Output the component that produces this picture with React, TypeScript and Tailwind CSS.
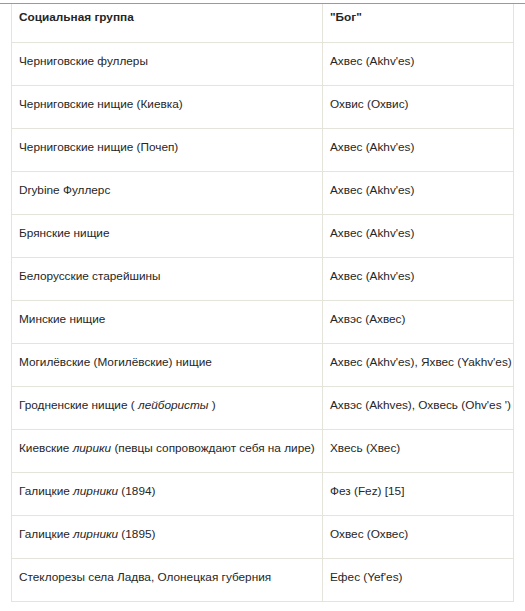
// Таблица «Социальная группа» / «Бог»: простая разметка с рамками.
const ROWS: { group: React.ReactNode; god: string }[] = [
  { group: 'Черниговские фуллеры', god: "Ахвес (Akhv'es)" },
  { group: 'Черниговские нищие (Киевка)', god: 'Охвис (Охвис)' },
  { group: 'Черниговские нищие (Почеп)', god: "Ахвес (Akhv'es)" },
  { group: 'Drybine Фуллерс', god: "Ахвес (Akhv'es)" },
  { group: 'Брянские нищие', god: "Ахвес (Akhv'es)" },
  { group: 'Белорусские старейшины', god: "Ахвес (Akhv'es)" },
  { group: 'Минские нищие', god: 'Ахвэс (Ахвес)' },
  {
    group: 'Могилёвские (Могилёвские) нищие',
    god: "Ахвес (Akhv'es), Яхвес (Yakhv'es)",
  },
  {
    group: (
      <>
        Гродненские нищие ( <i>лейбористы</i> )
      </>
    ),
    god: "Ахвэс (Akhves), Охвесь (Ohv'es ')",
  },
  {
    group: (
      <>
        Киевские <i>лирики</i> (певцы сопровождают себя на лире)
      </>
    ),
    god: 'Хвесь (Хвес)',
  },
  {
    group: (
      <>
        Галицкие <i>лирники</i> (1894)
      </>
    ),
    god: 'Фез (Fez) [15]',
  },
  {
    group: (
      <>
        Галицкие <i>лирники</i> (1895)
      </>
    ),
    god: 'Охвес (Охвес)',
  },
  {
    group: 'Стеклорезы села Ладва, Олонецкая губерния',
    god: "Ефес (Yef'es)",
  },
];

export default function App() {
  return (
    <div
      className="min-h-[611px] w-[525px] bg-white pt-[3px] text-[11.8px] leading-4 text-[#262626]"
      style={{ fontFamily: '"Liberation Sans", Arial, sans-serif' }}
    >
      <div className="h-px w-full bg-[#9a9a9a]" />
      <table className="ml-[11px] w-[502px] table-fixed border-collapse">
        <colgroup>
          <col className="w-[311px]" />
          <col className="w-[191px]" />
        </colgroup>
        <thead>
          <tr className="h-[38px]">
            <th className="border-x border-b border-[#e4e4da] px-[7px] pt-[5px] text-left align-top font-bold">
              Социальная группа
            </th>
            <th className="border-x border-b border-[#e4e4da] px-[7px] pt-[5px] text-left align-top font-bold">
              "Бог"
            </th>
          </tr>
        </thead>
        <tbody>
          {ROWS.map((r, i) => (
            <tr key={i} className="h-[43px]">
              <td className="border border-[#e4e4da] px-[7px] pt-[10px] align-top whitespace-nowrap">
                {r.group}
              </td>
              <td className="border border-[#e4e4da] px-[7px] pt-[10px] align-top whitespace-nowrap">
                {r.god}
              </td>
            </tr>
          ))}
        </tbody>
      </table>
    </div>
  );
}
